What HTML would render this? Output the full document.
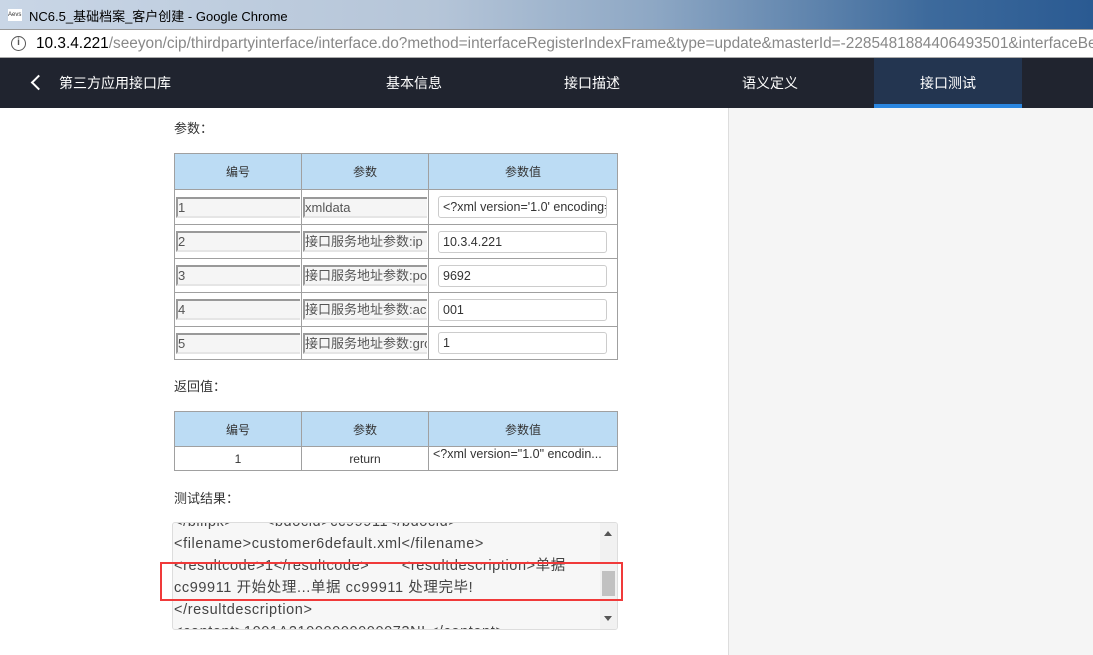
<!DOCTYPE html><html><head><meta charset="utf-8"><style>
*{margin:0;padding:0;box-sizing:border-box}
body{width:1093px;height:655px;overflow:hidden;background:#fff;font-family:"Liberation Sans","Noto Sans CJK SC",sans-serif;position:relative}
.a{position:absolute}
.title{left:0;top:0;width:1093px;height:29px;background:linear-gradient(90deg,#c9d6e6 0%,#b5c5d8 40%,#8da7c4 60%,#3d6a9c 85%,#2a5a92 100%)}
.addr{left:0;top:29px;width:1093px;height:29px;background:#fff;border-top:1px solid #999;border-bottom:1px solid #aaa;font-size:15.4px;line-height:27px;padding-left:36px;color:#888;white-space:nowrap;overflow:hidden}
.nav{left:0;top:58px;width:1093px;height:50px;background:#20242f;color:#fff;font-size:14px}
.tab{position:absolute;top:0;height:50px;line-height:50px;text-align:center}
table{border-collapse:collapse;position:absolute;font-size:12px;color:#333;table-layout:fixed}
td,th{border:1px solid #a0a0a0;text-align:center;font-weight:normal;overflow:hidden}
th{background:#bcdcf4}
.inp{border:1px solid #ccc;border-radius:3px;height:22px;background:#fff;text-align:left;padding-left:4px;line-height:20px;font-size:12.5px;margin:0 auto;overflow:hidden;white-space:nowrap}
.ro{background:#f5f5f5;border:none;border-top:2px solid #999;border-left:2px solid #999;border-bottom:2px solid #e5e5e5;height:21px;text-align:left;line-height:18px;color:#555;font-size:13px;overflow:hidden;white-space:nowrap}
</style></head><body>
<div class="a title"><div class="a" style="left:8px;top:9px;width:14px;height:12px;background:#fff;font-size:6px;color:#333;line-height:12px">Aevs</div><div class="a" style="left:29px;top:6px;font-size:13px;color:#000">NC6.5_基础档案_客户创建 - Google Chrome</div></div>
<div class="a addr"><span class="a" style="left:11px;top:6px;width:15px;height:15px;border:1.5px solid #555;border-radius:50%;font-size:10px;line-height:12px;text-align:center;color:#555;font-weight:bold">i</span><span style="color:#000">10.3.4.221</span>/seeyon/cip/thirdpartyinterface/interface.do?method=interfaceRegisterIndexFrame&amp;type=update&amp;masterId=-2285481884406493501&amp;interfaceBel</div>
<div class="a nav">
<div class="a" style="left:33px;top:19px;width:11px;height:11px;border-left:2px solid #fff;border-bottom:2px solid #fff;transform:rotate(45deg)"></div>
<div class="tab" style="left:59px">第三方应用接口库</div>
<div class="tab" style="left:340px;width:148px">基本信息</div>
<div class="tab" style="left:518px;width:148px">接口描述</div>
<div class="tab" style="left:696px;width:148px">语义定义</div>
<div class="tab" style="left:874px;width:148px;background:#233550">接口测试<div class="a" style="left:0;bottom:0;width:148px;height:4px;background:#2a86e0"></div></div>
</div>
<div class="a" style="left:728px;top:108px;width:365px;height:547px;background:#f5f5f5;border-left:1px solid #ddd"></div>
<div class="a" style="left:174px;top:118px;font-size:13px;color:#333">参数：</div>
<table style="left:174px;top:153px;width:444px">
<colgroup><col style="width:127px"><col style="width:127px"><col style="width:189px"></colgroup>
<tr style="height:36px"><th>编号</th><th>参数</th><th>参数值</th></tr>
<tr style="height:35px"><td style="padding:0 1px"><div class="ro">1</div></td><td style="padding:0 1px"><div class="ro">xmldata</div></td><td style="padding:0 10px 0 9px"><div class="inp">&lt;?xml version='1.0' encoding='UTF-8'?&gt;</div></td></tr>
<tr style="height:34px"><td style="padding:0 1px"><div class="ro">2</div></td><td style="padding:0 1px"><div class="ro">接口服务地址参数:ip</div></td><td style="padding:0 10px 0 9px"><div class="inp">10.3.4.221</div></td></tr>
<tr style="height:34px"><td style="padding:0 1px"><div class="ro">3</div></td><td style="padding:0 1px"><div class="ro">接口服务地址参数:port</div></td><td style="padding:0 10px 0 9px"><div class="inp">9692</div></td></tr>
<tr style="height:34px"><td style="padding:0 1px"><div class="ro">4</div></td><td style="padding:0 1px"><div class="ro">接口服务地址参数:account</div></td><td style="padding:0 10px 0 9px"><div class="inp">001</div></td></tr>
<tr style="height:33px"><td style="padding:0 1px"><div class="ro">5</div></td><td style="padding:0 1px"><div class="ro">接口服务地址参数:group</div></td><td style="padding:0 10px 0 9px"><div class="inp">1</div></td></tr>
</table>
<div class="a" style="left:174px;top:376px;font-size:13px;color:#333">返回值：</div>
<table style="left:174px;top:411px;width:444px">
<colgroup><col style="width:127px"><col style="width:127px"><col style="width:189px"></colgroup>
<tr style="height:35px"><th>编号</th><th>参数</th><th>参数值</th></tr>
<tr style="height:24px"><td>1</td><td>return</td><td style="text-align:left;padding-left:4px;vertical-align:top;font-size:12.5px;white-space:nowrap">&lt;?xml version="1.0" encodin...</td></tr>
</table>
<div class="a" style="left:174px;top:488px;font-size:13px;color:#333">测试结果：</div>
<div class="a" style="left:172px;top:522px;width:446px;height:108px;border:1px solid #ddd;border-radius:3px;background:#f7f7f7;overflow:hidden;font-size:14.5px;color:#444;line-height:22px;letter-spacing:0.6px">
<div style="position:absolute;left:1px;top:-12px;width:425px">&lt;/billpk&gt;&nbsp;&nbsp;&nbsp;&nbsp;&nbsp;&nbsp;&nbsp;&lt;bdocid&gt;cc99911&lt;/bdocid&gt;<br>&lt;filename&gt;customer6default.xml&lt;/filename&gt;<br>&lt;resultcode&gt;1&lt;/resultcode&gt;&nbsp;&nbsp;&nbsp;&nbsp;&nbsp;&nbsp;&nbsp;&lt;resultdescription&gt;单据<br>cc99911 开始处理...单据 cc99911 处理完毕!<br>&lt;/resultdescription&gt;<br>&lt;content&gt;1001A21000000000073NL&lt;/content&gt;</div>
<div class="a" style="right:0;top:0;width:17px;height:106px;background:#f1f1f1"><div class="a" style="left:4px;top:8px;border:4px solid transparent;border-bottom:5px solid #555;border-top:0"></div><div class="a" style="left:2px;top:48px;width:13px;height:25px;background:#c1c1c1"></div><div class="a" style="left:4px;top:93px;border:4px solid transparent;border-top:5px solid #555;border-bottom:0"></div></div>
</div>
<div class="a" style="left:160px;top:562px;width:463px;height:39px;border:2px solid #f03a3a"></div>
</body></html>
